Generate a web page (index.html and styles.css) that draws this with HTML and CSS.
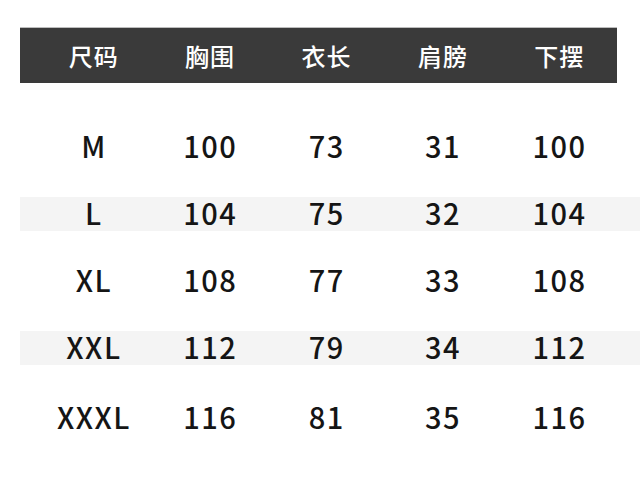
FILE: index.html
```html
<!DOCTYPE html>
<html lang="zh">
<head>
<meta charset="utf-8">
<link rel="stylesheet" href="styles.css">
</head>
<body>
<div class="page">
  <div class="head">
    <div>尺码</div><div>胸围</div><div>衣长</div><div>肩膀</div><div>下摆</div>
  </div>
  <div class="rows">
    <div class="row"><div class="size">M</div><div>100</div><div>73</div><div>31</div><div>100</div></div>
    <div class="row shade"><div class="size">L</div><div>104</div><div>75</div><div>32</div><div>104</div></div>
    <div class="row"><div class="size">XL</div><div>108</div><div>77</div><div>33</div><div>108</div></div>
    <div class="row shade"><div class="size">XXL</div><div>112</div><div>79</div><div>34</div><div>112</div></div>
    <div class="row last"><div class="size">XXXL</div><div>116</div><div>81</div><div>35</div><div>116</div></div>
  </div>
</div>
</body>
</html>
```
FILE: styles.css
```css
html, body {
  margin: 0;
  background: #ffffff;
}
.page {
  padding-top: 27px;
  font-family: "Noto Sans CJK SC", "Noto Sans", sans-serif;
}
.head {
  margin-left: 20px;
  width: 597px;
  height: 56px;
  box-sizing: border-box;
  padding-left: 15px;
  background: #3a3a3a;
  border-top: 1px solid #bdbdbd;
  display: grid;
  grid-template-columns: repeat(5, 1fr);
  align-items: center;
  color: #ffffff;
  font-size: 24px;
  font-weight: 500;
}
.head > div {
  text-align: center;
  line-height: 1;
  letter-spacing: 1px;
  padding-left: 1px;
}
.rows {
  margin-top: 47px;
  display: flex;
  flex-direction: column;
  gap: 33px;
}
.row {
  margin-left: 20px;
  height: 34px;
  padding-left: 15px;
  display: grid;
  grid-template-columns: repeat(5, 116.4px);
  align-items: center;
  color: #151515;
  font-size: 29px;
  font-weight: 500;
}
.row > div {
  text-align: center;
  line-height: 1;
  letter-spacing: 1.5px;
  padding-left: 1.5px;
  padding-bottom: 4px;
}
.row.shade {
  background: #f4f4f4;
}
.row.last {
  margin-top: 3px;
}
```
